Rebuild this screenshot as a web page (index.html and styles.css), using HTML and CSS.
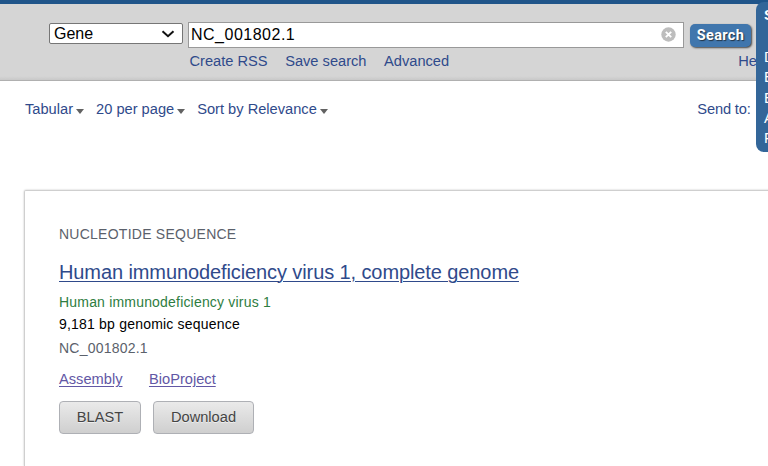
FILE: index.html
```html
<!DOCTYPE html>
<html lang="en">
<head>
<meta charset="utf-8">
<title>NC_001802.1 - Gene</title>
<link rel="stylesheet" href="styles.css">
</head>
<body>
<header class="header">
  <form class="search">
    <div class="select">Gene
      <svg class="chevron" width="14" height="8" viewBox="0 0 14 8"><path d="M1.500 1.200 7 6.200l5.500-5" fill="none" stroke="#111" stroke-width="2"/></svg>
    </div>
    <div class="field">NC_001802.1
      <svg class="clear" width="15" height="15" viewBox="0 0 15 15"><circle cx="7.500" cy="7.500" r="7.200" fill="#bdbdbd"/><path d="M4.800 4.800l5.400 5.400M10.200 4.800l-5.400 5.400" stroke="#fff" stroke-width="1.900"/></svg>
    </div>
    <button class="go" type="button">Search</button>
  </form>
  <nav class="links"><a>Create RSS</a><a>Save search</a><a>Advanced</a><a class="help">He</a></nav>
</header>
<div class="display">
  <a class="drop tabular">Tabular</a><a class="drop pages">20 per page</a><a class="drop">Sort by Relevance</a><a class="drop send">Send to:</a>
</div>
<main class="card">
  <div class="kind">NUCLEOTIDE SEQUENCE</div>
  <h1><a class="title">Human immunodeficiency virus 1, complete genome</a></h1>
  <div class="organism">Human immunodeficiency virus 1</div>
  <div class="length">9,181 bp genomic sequence</div>
  <div class="accession">NC_001802.1</div>
  <div class="related"><a>Assembly</a><a>BioProject</a></div>
  <div class="actions"><button class="blast">BLAST</button><button class="download">Download</button></div>
</main>
<aside class="popup"><b>S</b><span>D</span><span>E</span><span>E</span><span>A</span><span>F</span></aside>
</body>
</html>
```
FILE: styles.css
```css
* { box-sizing: border-box; }
html { overflow: hidden; }
body {
  margin: 0;
  width: 768px;
  height: 466px;
  overflow: hidden;
  position: relative;
  background: #fff;
  color: #000;
  font-family: "Liberation Sans", Arial, sans-serif;
  font-size: 14.65px;
}
a { color: #2f4a8b; }
.header {
  height: 81px;
  padding-top: 18px;
  border-top: 4px solid #20558a;
  border-bottom: 1px solid #b0b0b0;
  background: linear-gradient(#d5d5d5 95%, #c8c8c8);
}
.search { display: flex; height: 26px; margin: 0 0 0 49px; }
.select {
  display: flex;
  align-items: center;
  justify-content: space-between;
  width: 134px;
  height: 21px;
  margin: 1px 5px 0 0;
  padding: 0 7px 0 4px;
  border: 1px solid #767676;
  border-radius: 2px;
  background: #fff;
  font-size: 16px;
}
.field {
  display: flex;
  align-items: center;
  justify-content: space-between;
  width: 496px;
  height: 26px;
  padding: 0 7px 1px 2px;
  border: 1px solid #999;
  background: #fff;
  font-size: 16px;
  letter-spacing: .5px;
}
.go {
  width: 61px;
  height: 23px;
  margin: 2px 0 0 6px;
  padding: 0;
  border: 0;
  border-radius: 5px;
  background: #4076ad;
  box-shadow: 1px 1px 2px #444;
  color: #fff;
  font: bold 14.5px Roboto, sans-serif;
  letter-spacing: .35px;
  text-shadow: 1px 1px 1px #234;
}
.links { display: flex; gap: 17.5px; margin: 4px 0 0 189.500px; line-height: 18px; white-space: nowrap; }
.links a { flex: none; }
.help { margin-left: 271.5px; }
.display { display: flex; margin: 19px 0 0 25px; line-height: 18px; }
.drop { display: flex; flex: none; margin-right: 12px; white-space: nowrap; }
.drop::after {
  content: "";
  margin: 9px 0 0 3px;
  border: 4px solid transparent;
  border-top: 5px solid #626262;
  border-bottom: 0;
}
.send { margin-left: 357.5px; letter-spacing: -.15px; }
.send::after { border-top-color: #2f5f95; margin-left: 5px; }
.card {
  height: 276px;
  margin: 72px -12px 0 24px;
  padding: 34px 0 0 34px;
  border: 1px solid #cfcfcf;
  border-bottom: 0;
  border-radius: 2px 0 0 0;
  box-shadow: 0 0 2px #bbb;
}
.kind { color: #5b616b; font-size: 14px; line-height: 18px; letter-spacing: .25px; }
h1 { margin: 17px 0 0; font-weight: normal; font-size: 20px; line-height: 24px; letter-spacing: -.1px; }
.title { text-decoration: underline; text-underline-offset: 2px; text-decoration-thickness: 1px; }
.organism { margin-top: 9px; color: #2e7d41; font-size: 14px; line-height: 18px; letter-spacing: .19px; }
.length { margin-top: 4px; font-size: 14px; line-height: 18px; letter-spacing: .2px; }
.accession { margin-top: 6px; color: #5b616b; font-size: 14px; line-height: 18px; letter-spacing: .22px; }
.related { display: flex; gap: 26.500px; margin-top: 13px; line-height: 18px; }
.related a { color: #6257a5; text-decoration: underline; text-underline-offset: 2px; }
.actions { display: flex; gap: 12px; margin-top: 13px; }
.actions button {
  height: 33px;
  padding: 0 0 1px;
  border: 1px solid #aeb0b5;
  border-radius: 4px;
  background: linear-gradient(#eaeaea, #cfcfcf);
  color: #444;
  font: 14.65px "Liberation Sans", sans-serif;
  text-shadow: 0 1px 0 #eee;
}
.actions .blast { width: 82px; }
.actions .download { width: 101px; }
.popup {
  position: absolute;
  top: 2px;
  left: 756px;
  display: flex;
  flex-direction: column;
  width: 24px;
  height: 150px;
  padding: 3px 0 0 8px;
  border-radius: 8px 0 0 8px;
  background: #336699;
  color: #fff;
  font-size: 14.65px;
  line-height: 20.2px;
}
.popup b { margin-bottom: 22px; }
```
